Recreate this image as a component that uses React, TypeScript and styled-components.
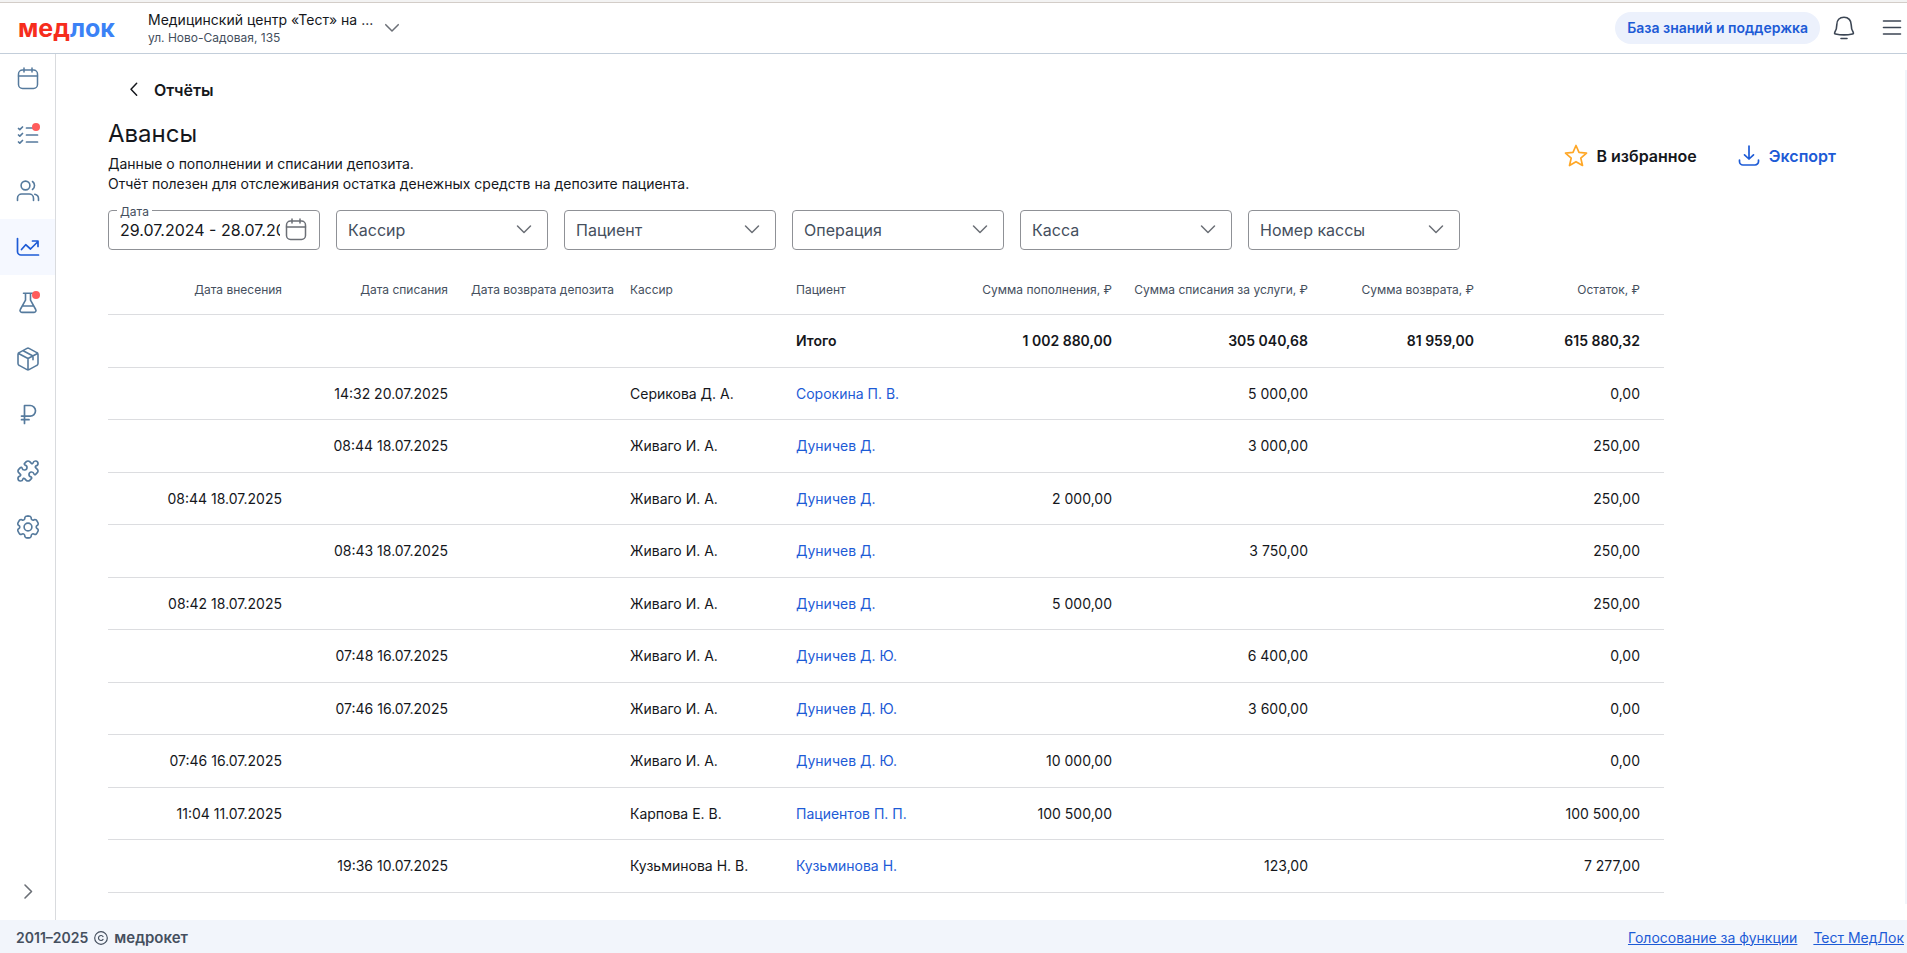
import React from 'react';
import styled, { createGlobalStyle, css } from 'styled-components';
import { Puzzle } from 'lucide-react';

const GlobalStyle = createGlobalStyle`
  *, *::before, *::after { box-sizing: border-box; }
  body {
    margin: 0;
    background: #fff;
    color: #15171c;
    font: 400 14px/20px Inter, "Liberation Sans", sans-serif;
  }
  button, input, select { font: inherit; color: inherit; }
  a { color: #1d5bd6; }
`;

const Page = styled.div`
  display: flex;
  flex-direction: column;
  height: 100vh;
  overflow: hidden;
  border-top: 2px solid #f3f3f3;
`;

const Header = styled.header`
  display: flex;
  align-items: center;
  flex: none;
  height: 52px;
  padding: 0 3px 0 18px;
  border-top: 1px solid #d3cdc8;
  border-bottom: 1px solid #c3ceda;
`;

const Logo = styled.a`
  width: 130px;
  color: #3b82f6;
  font-size: 25px;
  line-height: 32px;
  font-weight: 700;
  text-decoration: none;
  span { color: #f62d1c; }
`;

const PlainButton = styled.button`
  display: flex;
  align-items: center;
  padding: 0;
  border: 0;
  background: none;
  cursor: pointer;
`;

const ClinicButton = styled(PlainButton)`
  gap: 10px;
  text-align: left;
`;

const ClinicText = styled.span`
  padding-top: 2px;
`;

const ClinicName = styled.span`
  display: block;
  width: 224px;
  line-height: 18px;
  white-space: nowrap;
`;

const ClinicAddress = styled.span`
  display: block;
  font-size: 12px;
  line-height: 18px;
  color: #454f5e;
`;

const HeaderTools = styled.div`
  display: flex;
  align-items: center;
  margin-left: auto;
  color: #3c4654;
`;

const HelpButton = styled(PlainButton)`
  height: 32px;
  margin-right: 12px;
  padding: 0 12px;
  border-radius: 16px;
  background: #ecf1fc;
  color: #1d5bd6;
  font-weight: 600;
`;

const MenuButton = styled(PlainButton)`
  margin-left: 24px;
`;

const Body = styled.div`
  display: flex;
  flex: 1;
  min-height: 0;
`;

const Sidebar = styled.nav`
  display: flex;
  flex-direction: column;
  flex: none;
  width: 56px;
  border-right: 1px solid #d9dbde;
`;

const NavList = styled.ul`
  margin: -3px 0 auto;
  padding: 0;
  list-style: none;
`;

const NavLink = styled.a<{ $active?: boolean }>`
  display: flex;
  align-items: center;
  justify-content: center;
  position: relative;
  height: 56px;
  color: ${(p) => (p.$active ? '#1d5bd6' : '#557a9d')};
  background: ${(p) => (p.$active ? '#f5f8ff' : 'transparent')};
`;

const Dot = styled.span`
  position: absolute;
  top: 16px;
  right: 15px;
  width: 8px;
  height: 8px;
  border-radius: 50%;
  background: #ff5c5c;
`;

const ExpandButton = styled(PlainButton)`
  justify-content: center;
  height: 56px;
  color: #6b6f76;
`;

const Main = styled.main`
  flex: 1;
  min-width: 0;
  overflow: hidden;
  padding: 24px 69px 0 52px;
`;

const ScrollTrack = styled.div`
  flex: none;
  width: 2px;
  margin: 16px 0;
  background: #f2f5fb;
`;

const BackLink = styled.a`
  display: inline-flex;
  align-items: center;
  gap: 12px;
  margin-left: 18px;
  color: inherit;
  font-size: 16px;
  line-height: 24px;
  font-weight: 600;
  text-decoration: none;
`;

const TitleRow = styled.div`
  display: flex;
  justify-content: space-between;
  align-items: center;
  margin-top: 15px;
`;

const Title = styled.h1`
  margin: 0;
  font-size: 24px;
  line-height: 32px;
  font-weight: 400;
`;

const Description = styled.p`
  margin: 4px 0 0;
`;

const Actions = styled.div`
  display: flex;
  gap: 40px;
`;

const ActionButton = styled(PlainButton)<{ $primary?: boolean }>`
  gap: 8px;
  font-size: 16px;
  line-height: 24px;
  font-weight: 600;
  color: ${(p) => (p.$primary ? '#1d5bd6' : '#15171c')};
`;

const Filters = styled.form`
  display: flex;
  flex-wrap: wrap;
  gap: 16px;
  margin-top: 16px;
`;

const Field = styled.div`
  display: flex;
  align-items: center;
  position: relative;
  width: 212px;
  height: 40px;
  border: 1px solid #8f9196;
  border-radius: 4px;
  font-size: 16px;
  color: #454f5e;
  > svg {
    position: absolute;
    right: 11px;
    pointer-events: none;
  }
`;

const control = css`
  width: 100%;
  height: 38px;
  border: 0;
  border-radius: 4px;
  background: none;
  outline: none;
`;

const Select = styled.select`
  ${control}
  appearance: none;
  padding: 0 40px 0 11px;
`;

const DateInput = styled.input`
  ${control}
  width: 160px;
  margin-left: 11px;
  padding: 0;
  color: #15171c;
`;

const FieldLabel = styled.label`
  position: absolute;
  top: -7px;
  left: 8px;
  padding: 0 3px;
  background: #fff;
  font-size: 12px;
  line-height: 16px;
`;

const Table = styled.table`
  width: 1556px;
  margin-top: 15px;
  border-collapse: separate;
  border-spacing: 0;
  table-layout: fixed;
`;

const HeadRow = styled.tr`
  height: 50px;
`;

const TotalRow = styled.tr`
  height: 53px;
  font-weight: 600;
`;

const Row = styled.tr`
  height: 53px;
  &:nth-child(odd) { height: 52px; }
`;

const cell = css<{ $right?: boolean }>`
  padding: 0 8px;
  border-bottom: 1px solid #dcdde0;
  text-align: ${(p) => (p.$right ? 'right' : 'left')};
  white-space: nowrap;
  &:first-child { padding-left: 24px; }
  &:last-child { padding-right: 24px; }
`;

const HeadCell = styled.th<{ $right?: boolean }>`
  ${cell}
  font-size: 12px;
  font-weight: 400;
  color: #454f5e;
`;

const Cell = styled.td<{ $right?: boolean }>`
  ${cell}
`;

const PatientLink = styled.a`
  text-decoration: none;
`;

const Footer = styled.footer`
  display: flex;
  justify-content: space-between;
  align-items: center;
  flex: none;
  height: 33px;
  padding: 2px 3px 0 16px;
  background: #f2f5fb;
  color: #454f5e;
`;

const Copyright = styled.span`
  display: flex;
  align-items: center;
  gap: 6px;
  font-weight: 600;
`;

const Brand = styled.span`
  font-size: 15px;
`;

const FooterLinks = styled.div`
  display: flex;
  gap: 16px;
`;

type IconProps = { size?: number; width?: number; color?: string; children: React.ReactNode };

const Icon = ({ size = 24, width = 1.5, color = 'currentColor', children }: IconProps) => (
  <svg width={size} height={size} viewBox="0 0 24 24" fill="none" stroke={color} strokeWidth={width}
    strokeLinecap="round" strokeLinejoin="round" aria-hidden="true">
    {children}
  </svg>
);

const CalendarIcon = ({ color }: { color?: string }) => (
  <Icon color={color}>
    <rect x="2.5" y="3" width="19" height="18.5" rx="4" />
    <path d="M2.5 9h19M8 1v4M16 1v4" />
  </Icon>
);

const ChevronDown = () => (
  <Icon color="#6b6f76"><path d="M5.5 8l6.5 6.5L18.5 8" /></Icon>
);

const TasksIcon = () => (
  <Icon width={1.7}>
    <path d="M10.5 5h11M10.5 12h11M10.5 19h11M2.5 5.5l1.3 1.2L6.5 4M2.5 12l1.3 1.2L6.5 10.5M2.5 19l1.3 1.2L6.5 17.5" />
  </Icon>
);

const UsersIcon = () => (
  <Icon width={1.6}>
    <circle cx="9.5" cy="6.5" r="4.4" />
    <path d="M16.5 2.5c2.7 1.8 2.7 6.2 0 8M1.5 21.500v-2.300a4.200 4.200 0 0 1 4.200-4.200h7.600a4.200 4.200 0 0 1 4.200 4.200v2.300M18.800 15.200c2.200.5 3.700 2.200 3.700 4.300v2" />
  </Icon>
);

const ChartIcon = () => (
  <Icon width={1.7}>
    <path d="M1.5 3.500v13a3.500 3.500 0 0 0 3.500 3.500H22.500M5.500 14.500l4.200-4.800 4.800 4.300L22 6.500M16.500 6H22v5.500" />
  </Icon>
);

const FlaskIcon = () => (
  <Icon width={1.6}>
    <path d="M7.500 2.200h9M9.500 2.200v7L4.300 18.500A1.900 1.900 0 0 0 6 21.400h12a1.900 1.900 0 0 0 1.700-2.900L14.500 9.200v-7M6.500 15h11" />
  </Icon>
);

const BoxIcon = () => (
  <Icon width={1.6}>
    <path d="M11 1.400a2.200 2.200 0 0 1 2 0l7.800 4.200a2 2 0 0 1 1.200 1.800v9.200a2 2 0 0 1-1.200 1.800L13 22.600a2.200 2.200 0 0 1-2 0l-7.800-4.200A2 2 0 0 1 2 16.600V7.400a2 2 0 0 1 1.200-1.800zM2.500 6.500l9.500 5 9.500-5M12 11.500v11.200M7.200 3.800l9.800 5.200v3.700" />
  </Icon>
);

const RubleIcon = () => (
  <Icon width={1.7}>
    <path d="M8.500 20.500V2.500h5.700a5.300 5.300 0 0 1 0 10.600H5.500M5.500 16.700h7.500" />
  </Icon>
);

const gearHalf =
  'M12 2C11.068 2 10.602 2 10.235 2.152C9.745 2.355 9.355 2.745 9.152 3.235C9.060 3.458 9.023 3.718 9.009 4.098C8.988 4.656 8.702 5.172 8.219 5.451C7.736 5.730 7.146 5.720 6.652 5.459C6.316 5.281 6.073 5.183 5.833 5.151C5.307 5.082 4.775 5.224 4.354 5.547C4.039 5.789 3.806 6.193 3.340 7C2.874 7.807 2.641 8.210 2.589 8.605C2.520 9.131 2.662 9.663 2.985 10.083C3.133 10.276 3.340 10.437 3.661 10.639C4.134 10.936 4.438 11.442 4.438 12C4.438 12.558 4.134 13.064 3.661 13.361C3.340 13.563 3.132 13.724 2.985 13.917C2.662 14.337 2.520 14.869 2.589 15.395C2.641 15.789 2.874 16.193 3.340 17C3.806 17.807 4.039 18.211 4.354 18.453C4.775 18.776 5.307 18.918 5.833 18.849C6.073 18.817 6.316 18.719 6.652 18.541C7.145 18.280 7.736 18.270 8.219 18.549C8.702 18.828 8.988 19.344 9.009 19.902C9.023 20.282 9.060 20.542 9.152 20.765C9.355 21.255 9.745 21.645 10.235 21.848C10.602 22 11.068 22 12 22';

const GearIcon = () => (
  <Icon size={26}>
    <path d={gearHalf} />
    <path d={gearHalf} transform="translate(24 0) scale(-1 1)" />
    <circle cx="12" cy="12" r="3.6" />
  </Icon>
);

const navItems: { label: string; icon: React.ReactNode; dot?: boolean; active?: boolean }[] = [
  { label: 'Расписание', icon: <CalendarIcon /> },
  { label: 'Задачи', icon: <TasksIcon />, dot: true },
  { label: 'Пациенты', icon: <UsersIcon /> },
  { label: 'Отчёты', icon: <ChartIcon />, active: true },
  { label: 'Лаборатория', icon: <FlaskIcon />, dot: true },
  { label: 'Склад', icon: <BoxIcon /> },
  { label: 'Финансы', icon: <RubleIcon /> },
  { label: 'Интеграции', icon: <Puzzle size={24} strokeWidth={1.7} /> },
  { label: 'Настройки', icon: <GearIcon /> },
];

const filters = ['Кассир', 'Пациент', 'Операция', 'Касса', 'Номер кассы'];

const columns: { title: string; width: number; right?: boolean }[] = [
  { title: 'Дата внесения', width: 182, right: true },
  { title: 'Дата списания', width: 166, right: true },
  { title: 'Дата возврата депозита', width: 166, right: true },
  { title: 'Кассир', width: 166 },
  { title: 'Пациент', width: 166 },
  { title: 'Сумма пополнения, ₽', width: 166, right: true },
  { title: 'Сумма списания за услуги, ₽', width: 196, right: true },
  { title: 'Сумма возврата, ₽', width: 166, right: true },
  { title: 'Остаток, ₽', width: 182, right: true },
];

const totals = ['', '', '', '', 'Итого', '1 002 880,00', '305 040,68', '81 959,00', '615 880,32'];

const rows = [
  ['', '14:32 20.07.2025', '', 'Серикова Д. А.', 'Сорокина П. В.', '', '5 000,00', '', '0,00'],
  ['', '08:44 18.07.2025', '', 'Живаго И. А.', 'Дуничев Д.', '', '3 000,00', '', '250,00'],
  ['08:44 18.07.2025', '', '', 'Живаго И. А.', 'Дуничев Д.', '2 000,00', '', '', '250,00'],
  ['', '08:43 18.07.2025', '', 'Живаго И. А.', 'Дуничев Д.', '', '3 750,00', '', '250,00'],
  ['08:42 18.07.2025', '', '', 'Живаго И. А.', 'Дуничев Д.', '5 000,00', '', '', '250,00'],
  ['', '07:48 16.07.2025', '', 'Живаго И. А.', 'Дуничев Д. Ю.', '', '6 400,00', '', '0,00'],
  ['', '07:46 16.07.2025', '', 'Живаго И. А.', 'Дуничев Д. Ю.', '', '3 600,00', '', '0,00'],
  ['07:46 16.07.2025', '', '', 'Живаго И. А.', 'Дуничев Д. Ю.', '10 000,00', '', '', '0,00'],
  ['11:04 11.07.2025', '', '', 'Карпова Е. В.', 'Пациентов П. П.', '100 500,00', '', '', '100 500,00'],
  ['', '19:36 10.07.2025', '', 'Кузьминова Н. В.', 'Кузьминова Н.', '', '123,00', '', '7 277,00'],
];

export default function App() {
  return (
    <Page>
      <GlobalStyle />
      <Header>
        <Logo href="#"><span>мед</span>лок</Logo>
        <ClinicButton type="button">
          <ClinicText>
            <ClinicName>Медицинский центр «Тест» на ...</ClinicName>
            <ClinicAddress>ул. Ново-Садовая, 135</ClinicAddress>
          </ClinicText>
          <Icon size={20} color="#6b6f76" width={1.8}><path d="M4.5 8l7.5 7.5L19.5 8" /></Icon>
        </ClinicButton>
        <HeaderTools>
          <HelpButton type="button">База знаний и поддержка</HelpButton>
          <PlainButton type="button" aria-label="Уведомления">
            <Icon width={1.6}>
              <path d="M12 1.200c-4.500 0-7.200 3.300-7.200 7.500 0 4-.8 5.800-2 7.600-.5.800-.2 1.500.7 1.700 5.600 1.200 11.400 1.200 17 0 .9-.2 1.200-.9.700-1.700-1.200-1.800-2-3.600-2-7.600 0-4.200-2.700-7.500-7.200-7.500zM9 22.500h6" />
            </Icon>
          </PlainButton>
          <MenuButton type="button" aria-label="Меню">
            <Icon width={1.6}><path d="M3.5 5h17M3.5 11.5h17M3.5 18h17" /></Icon>
          </MenuButton>
        </HeaderTools>
      </Header>
      <Body>
        <Sidebar>
          <NavList>
            {navItems.map((item) => (
              <li key={item.label}>
                <NavLink href="#" aria-label={item.label} $active={item.active}>
                  {item.icon}
                  {item.dot && <Dot />}
                </NavLink>
              </li>
            ))}
          </NavList>
          <ExpandButton type="button" aria-label="Развернуть меню">
            <Icon width={1.6}><path d="M9 5l6.5 6.5L9 18" /></Icon>
          </ExpandButton>
        </Sidebar>
        <Main>
          <BackLink href="#">
            <Icon size={16} width={2.2}><path d="M16 2l-8.500 9 8.500 9" /></Icon>
            Отчёты
          </BackLink>
          <TitleRow>
            <div>
              <Title>Авансы</Title>
              <Description>
                Данные о пополнении и списании депозита.<br />
                Отчёт полезен для отслеживания остатка денежных средств на депозите пациента.
              </Description>
            </div>
            <Actions>
              <ActionButton type="button">
                <Icon color="#ffa726" width={1.7}>
                  <path d="M12 1.500l3 6.900 7.500.7-5.700 5 1.700 7.400L12 17.700l-6.500 3.800 1.700-7.400-5.700-5 7.500-.7z" />
                </Icon>
                В избранное
              </ActionButton>
              <ActionButton type="button" $primary>
                <Icon width={1.7}>
                  <path d="M12 2v13M7.500 10.800L12 15l4.500-4.200M2.500 16v1.500A3.500 3.500 0 0 0 6 21h12a3.500 3.500 0 0 0 3.500-3.500V16" />
                </Icon>
                Экспорт
              </ActionButton>
            </Actions>
          </TitleRow>
          <Filters>
            <Field>
              <FieldLabel htmlFor="period">Дата</FieldLabel>
              <DateInput id="period" defaultValue="29.07.2024 - 28.07.2025" />
              <CalendarIcon color="#6b6f76" />
            </Field>
            {filters.map((name) => (
              <Field key={name}>
                <Select aria-label={name} defaultValue="">
                  <option value="">{name}</option>
                </Select>
                <ChevronDown />
              </Field>
            ))}
          </Filters>
          <Table>
            <colgroup>
              {columns.map((c) => <col key={c.title} width={c.width} />)}
            </colgroup>
            <thead>
              <HeadRow>
                {columns.map((c) => (
                  <HeadCell key={c.title} scope="col" $right={c.right}>{c.title}</HeadCell>
                ))}
              </HeadRow>
              <TotalRow>
                {totals.map((value, i) => <Cell key={i} $right={columns[i].right}>{value}</Cell>)}
              </TotalRow>
            </thead>
            <tbody>
              {rows.map((row, r) => (
                <Row key={r}>
                  {row.map((value, i) => (
                    <Cell key={i} $right={columns[i].right}>
                      {i === 4 ? <PatientLink href="#">{value}</PatientLink> : value}
                    </Cell>
                  ))}
                </Row>
              ))}
            </tbody>
          </Table>
        </Main>
        <ScrollTrack />
      </Body>
      <Footer>
        <Copyright>
          2011–2025
          <Icon size={14} width={2}>
            <circle cx="12" cy="12" r="10.8" />
            <path d="M15.5 9.500a4.300 4.300 0 1 0 0 5" />
          </Icon>
          <Brand>медрокет</Brand>
        </Copyright>
        <FooterLinks>
          <a href="#">Голосование за функции</a>
          <a href="#">Тест МедЛок</a>
        </FooterLinks>
      </Footer>
    </Page>
  );
}
